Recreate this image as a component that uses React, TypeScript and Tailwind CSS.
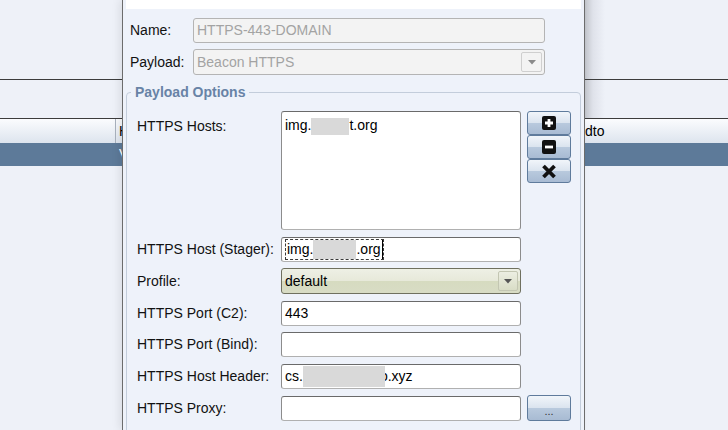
import React from "react"

const inputCls =
  "flex items-center h-[25px] w-[240px] rounded-[3px] border border-[#8c8c8c] border-t-[#6a6a6a] border-b-[#b0b0b0] bg-white px-[3px] text-[14px] text-black whitespace-nowrap overflow-hidden"

const btnCls =
  "flex items-center justify-center w-[44px] rounded-[3px] border border-[#5f7b9c] bg-[linear-gradient(to_bottom,#f1f5fa_0%,#dbe4ef_48%,#b8c9dd_52%,#a8bbd3_100%)]"

function Blur({ w, h }: { w: number; h: number }) {
  return <span className="inline-block bg-[#d9d9d9] align-middle" style={{ width: w, height: h }} />
}

function Arrow({ color }: { color: string }) {
  return (
    <svg width="8" height="5" viewBox="0 0 8 5">
      <path d="M0 0h8L4 4.5z" fill={color} />
    </svg>
  )
}

function Row({ label, children }: { label: string; children: React.ReactNode }) {
  return (
    <div className="flex items-center">
      <div className="w-[144px] text-[14px] text-[#111]">{label}</div>
      {children}
    </div>
  )
}

export default function App() {
  return (
    <div className="relative w-[728px] h-[430px] overflow-hidden bg-[#eef1f8] font-['Liberation_Sans',Arial,sans-serif]">
      {/* background window behind the dialog */}
      <div className="flex h-[79px]">
        <div className="w-[585px]" />
        <div className="flex-1 bg-[linear-gradient(to_right,#c3c6cc,#dfe2ea_8px,#eef1f8_20px)]" />
      </div>
      <div className="h-px bg-[#3c3c3c]" />
      <div className="flex h-[38px]">
        <div className="w-[585px]" />
        <div className="flex-1 bg-[linear-gradient(to_right,#c3c6cc,#dfe2ea_8px,#eef1f8_20px)]" />
      </div>
      <div className="h-px bg-[#3c3c3c]" />
      <div className="flex h-[24px] bg-[linear-gradient(to_bottom,#fbfcfe,#dde4ee)] text-[14px] text-black">
        <div className="w-[116px] border-r border-[#a9b1bd]" />
        <div className="w-[469px] pl-[3px] flex items-center">H</div>
        <div className="flex items-center">dto</div>
      </div>
      <div className="flex h-[23px] bg-[#5d7a99] text-[14px] text-white">
        <div className="w-[119px]" />
        <div className="flex items-center">V</div>
      </div>

      {/* dialog */}
      <div className="absolute left-[122px] top-0 w-[463px] h-[430px] border-x border-[#6c6c6c] bg-[#eef2fa] shadow-[-3px_0_8px_rgba(0,0,0,0.08)]">
        <div className="mx-[3px] h-[9px] bg-white" />
        <div className="flex flex-col gap-[6px] pl-[7px] pt-[9px]">
          <div className="flex items-center">
            <div className="w-[63px] text-[14px] text-[#111]">Name:</div>
            <div className="flex items-center h-[25px] w-[352px] rounded-[3px] border border-[#b4b4b4] bg-[#f3f3f3] px-[3px] text-[14px] text-[#a3a3a3]">
              HTTPS-443-DOMAIN
            </div>
          </div>
          <div className="flex items-center">
            <div className="w-[63px] text-[14px] text-[#111]">Payload:</div>
            <div className="flex items-center justify-between h-[26px] w-[352px] rounded-[3px] border border-[#b4b4b4] bg-[#f3f3f3] pl-[3px] pr-[2px] text-[14px] text-[#a3a3a3]">
              Beacon HTTPS
              <div className="flex items-center justify-center w-[21px] h-[20px] rounded-[2px] border border-[#cfcfcf]">
                <Arrow color="#8a8a8a" />
              </div>
            </div>
          </div>
        </div>

        <fieldset className="mx-[3px] mt-[9px] h-[400px] rounded-[4px] border border-[#c3cddb] pt-[11px]">
          <legend className="ml-[4px] px-[4px] text-[14px] leading-[16px] font-bold text-[#6883a6]">Payload Options</legend>
          <div className="flex flex-col gap-[6.5px] pl-[10px]">
            <div className="flex items-start">
              <div className="w-[144px] pt-[5px] text-[14px] text-[#111]">HTTPS Hosts:</div>
              <div className="h-[119px] w-[240px] rounded-[3px] border border-[#8c8c8c] border-t-[#6a6a6a] border-b-[#b0b0b0] bg-white px-[3px] pt-[4px] text-[14px] text-black leading-[18px] whitespace-nowrap">
                img.<Blur w={38} h={17} />t.org
              </div>
              <div className="ml-[6px] flex flex-col">
                <button className={btnCls + " h-[24px]"}>
                  <svg width="14" height="14" viewBox="0 0 14 14">
                    <rect width="14" height="14" rx="2" fill="#111" />
                    <path d="M7 3v8M3 7h8" stroke="#fff" strokeWidth="2.8" />
                  </svg>
                </button>
                <button className={btnCls + " h-[24px]"}>
                  <svg width="14" height="14" viewBox="0 0 14 14">
                    <rect width="14" height="14" rx="2" fill="#111" />
                    <path d="M3 7h8" stroke="#fff" strokeWidth="2.8" />
                  </svg>
                </button>
                <button className={btnCls + " h-[24px]"}>
                  <svg width="16" height="15" viewBox="0 0 16 15">
                    <path d="M2.5 2l11 11M13.5 2l-11 11" stroke="#111" strokeWidth="3.8" />
                  </svg>
                </button>
              </div>
            </div>

            <Row label="HTTPS Host (Stager):">
              <div className={inputCls + " px-[1px]"}>
                <div className="flex items-center h-[21px] border border-dashed border-[#3a3a3a] pl-[1px]">
                  img.<Blur w={43} h={19} />.org
                  <span className="inline-block w-px h-[19px] bg-black ml-px" />
                </div>
              </div>
            </Row>

            <Row label="Profile:">
              <div className="flex items-center justify-between h-[26px] w-[240px] rounded-[3px] border border-[#6f705f] bg-[linear-gradient(to_bottom,#eef0e5_0%,#e7e9da_48%,#d6dbc0_52%,#d8dcc5_100%)] pl-[3px] pr-[2px] text-[14px] text-black">
                default
                <div className="flex items-center justify-center w-[20px] h-[20px] rounded-[2px] border border-[#c3c6b2] bg-[linear-gradient(to_bottom,#eceee2,#d9ddc6)]">
                  <Arrow color="#555" />
                </div>
              </div>
            </Row>

            <Row label="HTTPS Port (C2):">
              <div className={inputCls}>443</div>
            </Row>

            <Row label="HTTPS Port (Bind):">
              <div className={inputCls} />
            </Row>

            <Row label="HTTPS Host Header:">
              <div className={inputCls}>
                cs.<span className="relative z-10 inline-block h-[21px] w-[82px] bg-[#d9d9d9] align-middle" />
                <span className="-ml-[5px]">o.xyz</span>
              </div>
            </Row>

            <div className="flex items-center">
              <div className="w-[144px] text-[14px] text-[#111]">HTTPS Proxy:</div>
              <div className={inputCls} />
              <button className={btnCls + " ml-[6px] h-[26px] w-[40px] items-end pb-[3px] text-[11px] leading-[11px] text-[#333]"}>...</button>
            </div>
          </div>
        </fieldset>
      </div>
    </div>
  )
}
